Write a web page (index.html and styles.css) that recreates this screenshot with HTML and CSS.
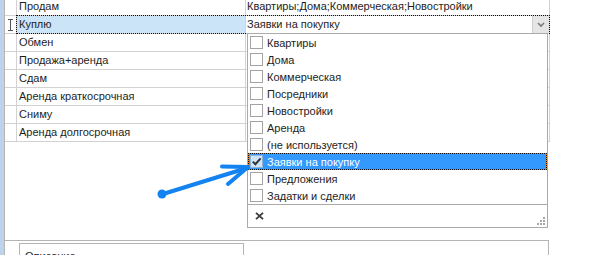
FILE: index.html
```html
<!DOCTYPE html>
<html lang="ru">
<head>
<meta charset="utf-8">
<title>Свойства</title>
<link rel="stylesheet" href="styles.css">
</head>
<body>
<div class="app">
  <div class="strip"></div>
  <div class="main">
    <div class="grid">
      <div class="row first"><div class="hdr"></div><div class="name">Продам</div><div class="val">Квартиры;Дома;Коммерческая;Новостройки</div></div>
      <div class="row sel">
        <div class="hdr"><svg class="ibeam" width="7" height="12" viewBox="0 0 7 12"><path d="M1 0.5H6M3.5 0.5V11.5M1 11.5H6" stroke="#555" stroke-width="1" fill="none"/></svg></div>
        <div class="name">Куплю</div>
        <div class="val combo"><span class="ctext">Заявки на покупку</span><span class="cbtn"><svg width="8" height="6" viewBox="0 0 8 6"><path d="M1 1L4 4L7 1" stroke="#7a7a7a" stroke-width="1.6" fill="none"/></svg></span></div>
      </div>
      <div class="row"><div class="hdr"></div><div class="name">Обмен</div><div class="val"></div></div>
      <div class="row"><div class="hdr"></div><div class="name">Продажа+аренда</div><div class="val"></div></div>
      <div class="row"><div class="hdr"></div><div class="name">Сдам</div><div class="val"></div></div>
      <div class="row"><div class="hdr"></div><div class="name">Аренда краткосрочная</div><div class="val"></div></div>
      <div class="row"><div class="hdr"></div><div class="name">Сниму</div><div class="val"></div></div>
      <div class="row"><div class="hdr"></div><div class="name">Аренда долгосрочная</div><div class="val"></div></div>
    </div>
    <div class="spacer"></div>
    <div class="bottom">
      <div class="memo"><span class="memo-text">Описание</span></div>
    </div>
  </div>
</div>

<div class="popup">
  <ul class="list">
    <li class="item"><span class="cb"></span><span>Квартиры</span></li>
    <li class="item"><span class="cb"></span><span>Дома</span></li>
    <li class="item"><span class="cb"></span><span>Коммерческая</span></li>
    <li class="item"><span class="cb"></span><span>Посредники</span></li>
    <li class="item"><span class="cb"></span><span>Новостройки</span></li>
    <li class="item"><span class="cb"></span><span>Аренда</span></li>
    <li class="item"><span class="cb"></span><span>(не используется)</span></li>
    <li class="item active"><span class="cb checked"><svg width="11" height="11" viewBox="0 0 11 11"><path d="M1.8 5.6L4.4 8.2L9.6 2.4" stroke="#333" stroke-width="2" fill="none"/></svg></span><span>Заявки на покупку</span></li>
    <li class="item"><span class="cb"></span><span>Предложения</span></li>
    <li class="item"><span class="cb"></span><span>Задатки и сделки</span></li>
  </ul>
  <div class="footer">
    <svg class="clear" width="9" height="8" viewBox="0 0 9 8"><path d="M1 0.8L8 7.2M8 0.8L1 7.2" stroke="#3a3a3a" stroke-width="1.8" fill="none"/></svg>
    <svg class="grip" width="9" height="9" viewBox="0 0 9 9"><g fill="#a8a8a8"><rect x="6" y="0" width="2" height="2"/><rect x="3" y="3" width="2" height="2"/><rect x="6" y="3" width="2" height="2"/><rect x="0" y="6" width="2" height="2"/><rect x="3" y="6" width="2" height="2"/><rect x="6" y="6" width="2" height="2"/></g></svg>
  </div>
</div>

<svg class="arrow" width="595" height="255" viewBox="0 0 595 255">
  <g stroke="#1283f0" stroke-width="4" stroke-linecap="round" stroke-linejoin="round" fill="none">
    <path d="M163 194L247 168"/>
    <path d="M222 166.5L248 167L228 184"/>
  </g>
  <circle cx="162" cy="194" r="4.5" fill="#1283f0"/>
</svg>
</body>
</html>
```

FILE: styles.css
```css
* { box-sizing: border-box; }
html, body { margin: 0; padding: 0; }
body {
  width: 595px;
  height: 255px;
  overflow: hidden;
  background: #fff;
  font-family: "Liberation Sans", Arial, sans-serif;
  font-size: 11px;
  color: #1e1e1e;
  position: relative;
}
.app {
  display: flex;
  height: 255px;
}
.strip {
  width: 4px;
  background: #bcd3eb;
  flex: none;
}
.main {
  flex: none;
  width: 545px;
  border-left: 1px solid #b4b4b4;
  display: flex;
  flex-direction: column;
}
.grid {
  margin-top: -2px;
  width: 545px;
}
.row {
  display: grid;
  grid-template-columns: 12px 229px 304px;
  height: 18px;
  position: relative;
}
.row > div {
  border-right: 1px solid #d2d2d2;
  border-bottom: 1px solid #d2d2d2;
  line-height: 17px;
  white-space: nowrap;
  overflow: hidden;
}
.name { padding-left: 2px; }
.val { padding-left: 1px; }
.hdr { display: flex; align-items: center; justify-content: center; }
.sel .name { background: #cce4f7; }
.sel::after {
  content: "";
  position: absolute;
  left: 11px;
  top: -1px;
  right: 0;
  bottom: 0;
  border: 1px dotted #111;
}
.combo {
  display: flex;
  justify-content: space-between;
}
.cbtn {
  width: 17px;
  background: #e5e5e5;
  border-left: 1px solid #d0d0d0;
  display: flex;
  align-items: center;
  justify-content: center;
}
.spacer { flex: 1; }
.bottom {
  height: 15px;
  border-top: 1px solid #b4b4b4;
  border-right: 1px solid #b4b4b4;
  padding: 2px 0 0 14px;
}
.memo {
  width: 225px;
  height: 20px;
  border: 1px solid #b4b4b4;
  border-bottom: none;
  padding: 6px 0 0 5px;
  line-height: 13px;
}
.popup {
  position: absolute;
  left: 247px;
  top: 33px;
  width: 301px;
  height: 195px;
  border: 1px solid #aaa;
  background: #fff;
  display: flex;
  flex-direction: column;
}
.list {
  list-style: none;
  margin: 0;
  padding: 0;
}
.item {
  height: 17px;
  display: flex;
  align-items: center;
  padding-left: 2px;
  gap: 4px;
  white-space: nowrap;
}
.item.active {
  background: linear-gradient(#3399ff, #3399ff) padding-box, linear-gradient(#e8821e, #e8821e) border-box;
  border: 1px dotted #111;
  padding-left: 1px;
  color: #fff;
}
.cb {
  width: 13px;
  height: 13px;
  border: 1px solid #a3a3a3;
  background: #fff;
  flex: none;
  display: flex;
  align-items: center;
  justify-content: center;
}
.cb.checked {
  background: #cde6fb;
  border-color: #8fb4d8;
}
.footer {
  flex: 1;
  border-top: 1px solid #aaa;
  position: relative;
  display: flex;
  align-items: center;
  padding-left: 7px;
}
.grip {
  position: absolute;
  right: 1px;
  bottom: 1px;
}
.arrow {
  position: absolute;
  left: 0;
  top: 0;
  pointer-events: none;
}
```
